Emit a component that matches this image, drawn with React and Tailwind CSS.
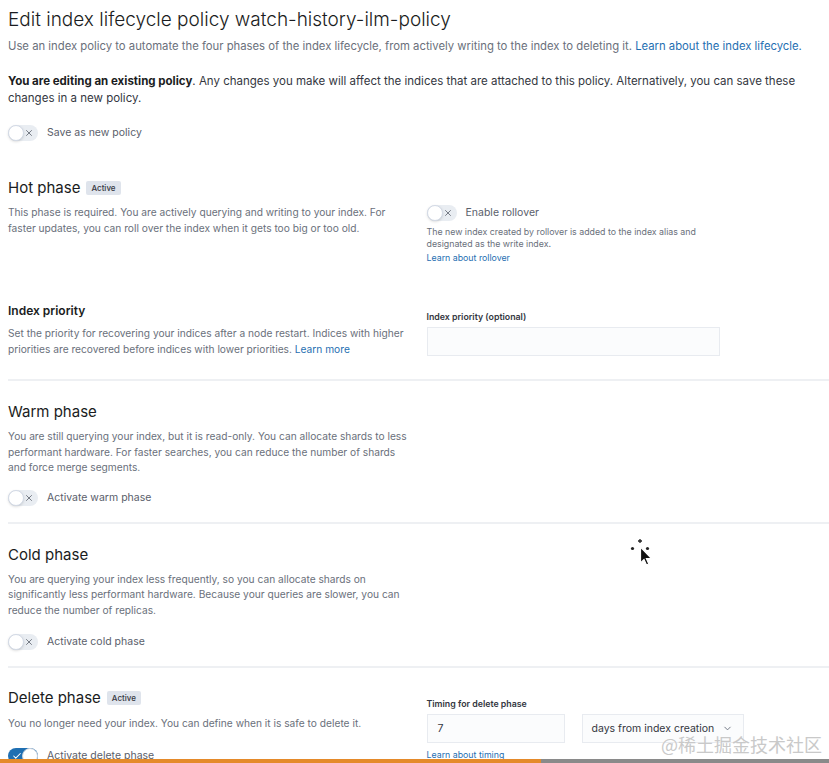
import { X, Check, ChevronDown } from "lucide-react";

const font = { fontFamily: "Inter, 'Noto Sans', sans-serif" };

function Switch({ on = false, label }) {
  return (
    <div className="flex items-center gap-[9px] h-4">
      {on ? (
        <span className="relative w-[30px] h-4 rounded-full bg-[#1f6fb2] flex items-center">
          <Check size={10} strokeWidth={2.5} className="text-white ml-[4px]" />
          <span className="absolute right-0 top-0 w-4 h-4 rounded-full bg-white border border-[#c9d1dc]" />
        </span>
      ) : (
        <span className="relative w-[30px] h-4 rounded-full bg-[#e9edf2] flex items-center justify-end">
          <X size={10} strokeWidth={2} className="text-[#5f6570] mr-[4px]" />
          <span className="absolute left-0 top-0 w-4 h-4 rounded-full bg-white border border-[#d3dae6] shadow-sm" />
        </span>
      )}
      <span className="text-[10.5px] text-[#5a606b]">{label}</span>
    </div>
  );
}

function Badge() {
  return (
    <span className="ml-[6px] inline-flex items-center h-[14px] px-[5px] rounded-[2px] bg-[#dfe4ec] text-[8px] font-medium text-[#343741]">
      Active
    </span>
  );
}

function Lines({ lines, className = "" }) {
  return (
    <p className={`text-[10.2px] leading-[15.5px] text-[#6a707b] ${className}`}>
      {lines.map((l, i) => (
        <span key={i} className="block whitespace-nowrap">
          {l}
        </span>
      ))}
    </p>
  );
}

function Divider() {
  return <div className="h-[2px] bg-[#eef0f3]" />;
}

export default function App() {
  return (
    <div className="relative h-[763px] overflow-hidden bg-white text-[#343741]" style={font}>
      <div className="pl-2 pt-2">
        <h1 className="text-[19px] leading-6 font-light text-[#1a1c21] whitespace-nowrap">
          Edit index lifecycle policy watch-history-ilm-policy
        </h1>
        <p className="mt-[5px] text-[11.3px] leading-[18px] text-[#6a707b] whitespace-nowrap">
          Use an index policy to automate the four phases of the index lifecycle, from actively writing to the index to deleting it.{" "}
          <span className="text-[#1f6fb2]">Learn about the index lifecycle.</span>
        </p>
        <p className="mt-[18px] text-[11.5px] leading-[17px] text-[#343741]">
          <span className="block whitespace-nowrap">
            <span className="font-bold text-[#1a1c21]">You are editing an existing policy</span>. Any changes you make will affect the indices that are attached to this policy. Alternatively, you can save these
          </span>
          <span className="block">changes in a new policy.</span>
        </p>
        <div className="mt-[18px]">
          <Switch label="Save as new policy" />
        </div>

        {/* Hot phase */}
        <div className="mt-[37px] grid grid-cols-2 gap-x-4">
          <div>
            <h2 className="flex items-center text-[15px] leading-5 text-[#1a1c21]">
              Hot phase <Badge />
            </h2>
            <Lines
              className="mt-[6px] leading-[16px]"
              lines={[
                "This phase is required. You are actively querying and writing to your index. For",
                "faster updates, you can roll over the index when it gets too big or too old.",
              ]}
            />
          </div>
          <div className="pt-[27px]">
            <Switch label="Enable rollover" />
            <p className="mt-[5px] text-[8.8px] leading-[12px] text-[#6a707b]">
              <span className="block">The new index created by rollover is added to the index alias and</span>
              <span className="block">designated as the write index.</span>
              <span className="block mt-[2px] text-[#1f6fb2]">Learn about rollover</span>
            </p>
          </div>
        </div>

        <div className="mt-[39px] grid grid-cols-2 gap-x-4 pb-[22px]">
          <div>
            <h3 className="text-[12px] leading-4 font-semibold text-[#1a1c21]">Index priority</h3>
            <p className="mt-[6px] text-[10.2px] leading-[16px] text-[#6a707b]">
              <span className="block whitespace-nowrap">
                Set the priority for recovering your indices after a node restart. Indices with higher
              </span>
              <span className="block whitespace-nowrap">
                priorities are recovered before indices with lower priorities.{" "}
                <span className="text-[#1f6fb2]">Learn more</span>
              </span>
            </p>
          </div>
          <div className="pt-2">
            <label className="block text-[8.8px] leading-3 font-semibold text-[#343741]">Index priority (optional)</label>
            <div className="mt-[4px] w-[293px] h-[29px] bg-[#fbfcfd] border border-[#e8ebf0]" />
          </div>
        </div>

        <Divider />

        {/* Warm phase */}
        <div className="pt-[21px] pb-[16px]">
          <h2 className="text-[15px] leading-5 text-[#1a1c21]">Warm phase</h2>
          <Lines
            className="mt-[7px]"
            lines={[
              "You are still querying your index, but it is read-only. You can allocate shards to less",
              "performant hardware. For faster searches, you can reduce the number of shards",
              "and force merge segments.",
            ]}
          />
          <div className="mt-[14px]">
            <Switch label="Activate warm phase" />
          </div>
        </div>

        <Divider />

        {/* Cold phase */}
        <div className="pt-[21px] pb-[16px]">
          <h2 className="text-[15px] leading-5 text-[#1a1c21]">Cold phase</h2>
          <Lines
            className="mt-[7px]"
            lines={[
              "You are querying your index less frequently, so you can allocate shards on",
              "significantly less performant hardware. Because your queries are slower, you can",
              "reduce the number of replicas.",
            ]}
          />
          <div className="mt-[16px]">
            <Switch label="Activate cold phase" />
          </div>
        </div>

        <Divider />

        {/* Delete phase */}
        <div className="pt-[20px] grid grid-cols-2 gap-x-4">
          <div>
            <h2 className="flex items-center text-[15px] leading-5 text-[#1a1c21]">
              Delete phase <Badge />
            </h2>
            <Lines className="mt-[8px]" lines={["You no longer need your index. You can define when it is safe to delete it."]} />
            <div className="mt-[16px]">
              <Switch on label="Activate delete phase" />
            </div>
          </div>
          <div className="pt-[10px]">
            <label className="block text-[8.8px] leading-3 font-semibold text-[#343741]">Timing for delete phase</label>
            <div className="mt-[4px] flex gap-[17px]">
              <div className="w-[138px] h-[29px] bg-[#fbfcfd] border border-[#e8ebf0] flex items-center px-[10px] text-[10.5px] text-[#343741]">
                7
              </div>
              <div className="w-[162px] h-[29px] bg-[#fbfcfd] border border-[#e8ebf0] flex items-center justify-between pl-[9px] pr-[10px] text-[10.5px] text-[#343741]">
                days from index creation
                <ChevronDown size={11} className="text-[#69707d]" />
              </div>
            </div>
            <a className="block mt-[6px] text-[8.8px] leading-3 text-[#1f6fb2]">Learn about timing</a>
          </div>
        </div>
      </div>

      {/* mouse cursor */}
      <svg className="absolute left-[628px] top-[536px]" width="28" height="32" viewBox="0 0 28 32">
        <path d="M12 3v4M10 5h4" stroke="#222" strokeWidth="1.3" />
        <circle cx="4.5" cy="12.5" r="1.6" fill="#222" />
        <circle cx="19.5" cy="12.5" r="1.6" fill="#222" />
        <path d="M12.5 11 L12.5 27 L16 23.5 L18.5 29 L20.8 28 L18.4 22.6 L23.5 22.6 Z" fill="#111" stroke="#fff" strokeWidth="1.2" />
      </svg>

      {/* watermark */}
      <div
        className="absolute right-[7px] bottom-[7px] text-[18px] leading-6 text-[#c9c9c9]"
        style={{ fontFamily: "'Noto Sans CJK SC', sans-serif", textShadow: "0 0 1px rgba(255,255,255,0.8)" }}
      >
        @稀土掘金技术社区
      </div>

      {/* video progress bar */}
      <div className="absolute left-0 right-0 bottom-0 h-[4px] flex">
        <div className="w-[541px] bg-[#e58a2a]" />
        <div className="flex-1 bg-[#8a8a8a]" />
      </div>
    </div>
  );
}
